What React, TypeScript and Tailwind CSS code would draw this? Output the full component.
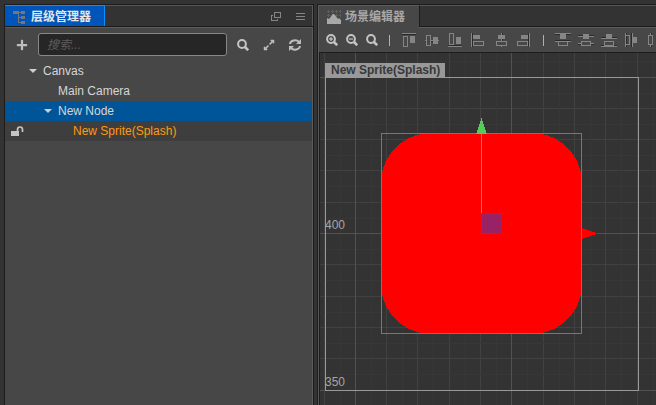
import { useState } from 'react';
import { FaExpandAlt, FaPlus } from 'react-icons/fa';

type AlignKind = 'top' | 'middle' | 'bottom' | 'left' | 'center' | 'right';
type DistributeKind = 'top' | 'middle' | 'bottom' | 'left' | 'center';

const tree = [
  { name: 'Canvas', pad: 'pl-0', open: true, unlocked: false },
  { name: 'Main Camera', pad: 'pl-[15px]', open: false, unlocked: false },
  { name: 'New Node', pad: 'pl-[15px]', open: true, unlocked: false },
  { name: 'New Sprite(Splash)', pad: 'pl-[30px]', open: false, unlocked: true },
];

const alignItems: AlignKind[] = ['top', 'middle', 'bottom', 'left', 'center', 'right'];
const distributeItems: DistributeKind[] = ['top', 'middle', 'bottom', 'left', 'center'];

function TreeIcon() {
  return (
    <svg width="13" height="14" viewBox="0 0 13 14" fill="none" shapeRendering="crispEdges" aria-hidden="true">
      <path d="M0 1h6v3H0zM8 1h4v3H8zM8 6h4v3H8zM8 11h4v3H8z" fill="#74767a" />
      <path d="M6 2.5h2M5.500 4v8.5H8M5.500 7.5H8" stroke="#74767a" />
    </svg>
  );
}

function SceneIcon() {
  return (
    <svg width="14" height="14" viewBox="0 0 14 14" aria-hidden="true">
      <path d="M0 1.5h14M0 5.5h14M1.5 0v8M5.5 0v8M9.5 0v8M13.5 0v8" stroke="#5e5e5e" strokeDasharray="3 1" shapeRendering="crispEdges" />
      <path d="M0 14V8l2 1 4-5h1l4 5 1-1 2 2v4z" fill="#a8a8a8" />
    </svg>
  );
}

function RefreshIcon() {
  return (
    <svg width="12" height="12" viewBox="0 0 12 12" fill="none" stroke="#bdbdbd" strokeWidth="2" aria-hidden="true">
      <path d="M1 5a5 4 0 0 1 9-2M11 7a5 4 0 0 1-9 2" />
      <path d="M12 0v5H7zM0 12V7h5z" fill="#bdbdbd" stroke="none" />
    </svg>
  );
}

function UnlockIcon() {
  return (
    <svg width="13" height="11" viewBox="0 0 13 11" fill="none" aria-hidden="true">
      <path d="M0 5h8v5H0z" fill="#c4c4c4" />
      <path d="M6.500 5V3.500a2.500 2.500 0 0 1 5 0V6" stroke="#c4c4c4" strokeWidth="1.7" />
    </svg>
  );
}

function ZoomIcon({ sign }: { sign?: 'plus' | 'minus' }) {
  return (
    <svg width="12" height="12" viewBox="0 0 12 12" fill="none" stroke="#c4c4c4" aria-hidden="true">
      <circle cx="5" cy="5" r="3.9" strokeWidth="2" />
      <path d="M8 8l3.200 3.200" strokeWidth="2.6" />
      {sign && <path d="M3 5h4" strokeWidth="1.2" />}
      {sign === 'plus' && <path d="M5 3v4" strokeWidth="1.2" />}
    </svg>
  );
}

const alignPaths = {
  top: { line: 'M0 .5h14', shade: 'M0 1.5h14', box: 'M1.5 3.5h4v10h-4z', solid: 'M8 3h5v7H8z' },
  middle: { line: 'M0 7.5h1M6 7.5h3M13 7.5h1', shade: 'M0 8.5h1M6 8.5h3', box: 'M1.5 2.5h4v10h-4z', solid: 'M8 4h5v7H8z' },
  bottom: { line: 'M0 13.5h14', shade: 'M0 12.5h14', box: 'M1.5 .5h4v11h-4z', solid: 'M8 4h5v7H8z' },
  left: { line: 'M.5 0v14', shade: 'M1.5 0v14', box: 'M2.5 8.5h10v4h-10z', solid: 'M2 2h7v4H2z' },
  center: { line: 'M7.5 0v2M7.5 6v2M7.5 13v1', shade: 'M8.5 0v2M8.5 6v2', box: 'M2.5 8.5h10v4h-10z', solid: 'M4 2h7v4H4z' },
  right: { line: 'M12.5 0v14', shade: 'M11.5 0v14', box: 'M.5 8.5h10v4H.5z', solid: 'M4 2h7v4H4z' },
};

function AlignIcon({ kind }: { kind: AlignKind }) {
  const { line, shade, box, solid } = alignPaths[kind];
  return (
    <svg width="14" height="14" viewBox="0 0 14 14" fill="none" stroke="#858585" shapeRendering="crispEdges" aria-hidden="true">
      <path d={shade} stroke="#2b2b2b" />
      <path d={line} />
      <path d={box} />
      <path d={solid} fill="#858585" stroke="none" />
    </svg>
  );
}

const distributePaths = {
  top: { line: 'M0 .5h16M0 8.5h16', shade: 'M0 1.5h16M0 7.5h16', box: 'M3.5 8.5h9v4h-9z', solid: 'M5 1h6v5H5z' },
  middle: { line: 'M0 3.5h16M0 10.5h3M13 10.5h3', shade: 'M0 2.5h16M0 11.5h3M13 11.5h3', box: 'M3.5 8.5h9v4h-9z', solid: 'M5 1h6v5H5z' },
  bottom: { line: 'M0 5.5h16M0 13.5h16', shade: 'M0 4.5h16M0 12.5h16', box: 'M3.5 8.5h9v4h-9z', solid: 'M5 1h6v4H5z' },
  left: { line: 'M1.5 0v14M8.5 0v14', shade: 'M2.5 0v14M7.500 0v14', box: 'M1.5 2.5h4v9h-4z', solid: 'M9 4h4v6h-4z' },
  center: { line: 'M3.5 0v2M3.5 12v2M11.5 0v14', shade: 'M4.5 0v2M4.5 12v2', box: 'M1.5 2.5h4v9h-4z', solid: 'M10 4h4v6h-4z' },
};

function DistributeIcon({ kind }: { kind: DistributeKind }) {
  const { line, shade, box, solid } = distributePaths[kind];
  return (
    <svg width="16" height="14" viewBox="0 0 16 14" fill="none" stroke="#858585" shapeRendering="crispEdges" aria-hidden="true">
      <path d={shade} stroke="#2b2b2b" />
      <path d={line} />
      <path d={box} />
      <path d={solid} fill="#858585" stroke="none" />
    </svg>
  );
}

function Divider() {
  return <span className="h-[11px] w-px shrink-0 bg-[#b0b0b0]" />;
}

function Hierarchy() {
  const [selected, setSelected] = useState('New Node');
  const iconButton = 'flex h-5 w-5 items-center justify-center text-[#bdbdbd]';

  return (
    <section className="flex w-[310px] shrink-0 flex-col border border-b-0 border-[#1c1c1c] bg-[#474747]">
      <header className="flex h-[22px] items-stretch border-b border-[#1c1c1c] bg-[#333]">
        <h2 className="flex w-[100px] items-center gap-[5px] border-t border-r border-[#0b8cff] bg-[#0055bb] pt-px pl-2 text-[12px] font-bold text-[#e6e6e6]">
          <TreeIcon />
          层级管理器
        </h2>
        <div className="flex flex-1 items-center justify-end gap-[15px] border-t border-r border-[#565656] pr-[7px]">
          <button type="button" aria-label="Pop out">
            <svg width="10" height="9" viewBox="0 0 10 9" fill="none" stroke="#858585" shapeRendering="crispEdges">
              <path d="M3.5 .5h6v5h-6zM2 3.5H.5v5h6V7" />
            </svg>
          </button>
          <button type="button" aria-label="Menu">
            <svg width="9" height="7" viewBox="0 0 9 7" stroke="#858585" shapeRendering="crispEdges">
              <path d="M0 .5h9M0 3.5h9M0 6.5h9" />
            </svg>
          </button>
        </div>
      </header>
      <div className="flex flex-1 flex-col border-t border-r border-[#5c5c5c]">
        <div className="flex h-[33px] items-center gap-[6px] px-[7px]">
          <button type="button" aria-label="Add" className={iconButton}><FaPlus size={12} /></button>
          <input
            aria-label="搜索"
            placeholder="搜索..."
            className="h-[23px] min-w-0 flex-1 rounded-[3px] border border-[#888] bg-[#262626] px-2 text-[12px] text-[#ccc] italic placeholder-[#5c5c5c]"
          />
          <button type="button" aria-label="Search" className={iconButton}><ZoomIcon /></button>
          <button type="button" aria-label="Expand" className={iconButton}><FaExpandAlt size={12} /></button>
          <button type="button" aria-label="Refresh" className={iconButton}><RefreshIcon /></button>
        </div>
        <ul>
          {tree.map((node) => (
            <li
              key={node.name}
              className={`flex h-5 items-center text-[12px] ${
                node.name === selected ? 'bg-[#005599]' : node.unlocked ? 'bg-[#3e3e3e]' : ''
              } ${node.unlocked ? 'text-[#fd9a10]' : 'text-[#d6d6d6]'}`}
            >
              <span className="flex w-6 shrink-0 justify-center">
                {node.unlocked && <UnlockIcon />}
              </span>
              <button
                type="button"
                onClick={() => setSelected(node.name)}
                className={`flex flex-1 items-center ${node.pad}`}
              >
                <span className="w-[14px] shrink-0">
                  {node.open && (
                    <svg width="8" height="4" viewBox="0 0 8 4" fill="#cfcfcf">
                      <path d="M0 0h8L4 4z" />
                    </svg>
                  )}
                </span>
                {node.name}
              </button>
            </li>
          ))}
        </ul>
      </div>
    </section>
  );
}

// grid cells are 10 world units wide, every fifth line is a major one
const CELL = 31.3;

function SceneView() {
  const lines = Array.from({ length: 64 }, (_, i) => i - 1);
  return (
    <svg className="min-h-0 w-full flex-1 bg-[#333]" fill="none" shapeRendering="crispEdges" role="img" aria-label="Scene">
      {lines.map((i) => {
        const x = Math.floor(4 + i * CELL) + 0.5;
        const y = Math.floor(24 + i * CELL) + 0.5;
        return (
          <g key={i} stroke="#414141">
            <line x1={x + 16} x2={x + 16} y1="0" y2="100%" stroke="#373737" />
            <line x1="0" x2="100%" y1={y + 16} y2={y + 16} stroke="#373737" />
            <line x1={x} x2={x} y1="0" y2="100%" />
            <line x1="0" x2="100%" y1={y} y2={y} />
          </g>
        );
      })}
      {lines.filter((i) => i % 5 === 0).map((i) => {
        const x = Math.floor(4 + (i + 1) * CELL) + 0.5;
        const y = Math.floor(24 + i * CELL) + 0.5;
        return (
          <g key={i} stroke="#525252">
            <line x1={x} x2={x} y1="0" y2="100%" />
            <line x1="0" x2="100%" y1={y} y2={y} />
          </g>
        );
      })}
      <rect x="5.5" y="24.5" width="313" height="313" stroke="#999" />
      <g className="text-[12px]" fill="#a5a5a5">
        <text x="5" y="176">400</text>
        <text x="5" y="333">350</text>
      </g>
      <rect x="5" y="10" width="120" height="15" fill="#999" />
      <text x="11" y="21" className="text-[12px] font-bold" fill="#383838">New Sprite(Splash)</text>

      <rect x="61" y="80" width="201" height="201" rx="50" fill="#f00" />
      <rect x="61.5" y="80.5" width="200" height="200" stroke="#1d8fe8" />
      <path d="M161.5 81v79" stroke="#9b9b35" />
      <path d="M161.5 65l5.5 16h-11z" fill="#55cc55" />
      <path d="M262 175l16 5.5-16 5.5z" fill="#f00" />
      <rect x="161.5" y="160.5" width="20" height="20" fill="#992266" stroke="#4a3fc4" />
    </svg>
  );
}

function SceneEditor() {
  const tool = 'flex shrink-0 items-center justify-center';
  return (
    <section className="flex min-w-0 flex-1 flex-col border-t border-l border-[#1c1c1c] bg-[#474747]">
      <header className="flex h-[23px] shrink-0 border-l border-[#5c5c5c]">
        <h2 className="flex w-[100px] items-center gap-1 border-t border-[#5c5c5c] pl-2 text-[12px] font-bold text-[#a8a8a8]">
          <SceneIcon />
          场景编辑器
        </h2>
        <div className="flex flex-1 flex-col border-b border-[#5c5c5c]">
          <div className="flex-1 border-t border-b border-l border-t-[#565656] border-b-[#1c1c1c] border-l-[#1c1c1c] bg-[#333]" />
        </div>
      </header>
      <div className="flex h-6 shrink-0 items-center overflow-hidden border-l border-[#5c5c5c] pl-[7px]">
        <div className="flex items-center gap-2 pr-[11px]">
          <button type="button" aria-label="Zoom in" className={tool}><ZoomIcon sign="plus" /></button>
          <button type="button" aria-label="Zoom out" className={tool}><ZoomIcon sign="minus" /></button>
          <button type="button" aria-label="Reset zoom" className={tool}><ZoomIcon /></button>
        </div>
        <Divider />
        <div className="flex items-center gap-[9px] px-3">
          {alignItems.map((kind) => (
            <button key={kind} type="button" aria-label={`Align ${kind}`} className={tool}>
              <AlignIcon kind={kind} />
            </button>
          ))}
        </div>
        <Divider />
        <div className="flex items-center gap-[7px] pl-[11px]">
          {distributeItems.map((kind) => (
            <button key={kind} type="button" aria-label={`Distribute ${kind}`} className={tool}>
              <DistributeIcon kind={kind} />
            </button>
          ))}
        </div>
      </div>
      <div className="flex flex-1 flex-col border-l border-[#5c5c5c]">
        <div className="flex flex-1 flex-col border-t border-l border-[#1c1c1c]">
          <SceneView />
        </div>
      </div>
    </section>
  );
}

export default function App() {
  return (
    <div className="flex min-h-screen gap-[3px] bg-[#333] pt-1 pl-1 font-['Liberation_Sans','Noto_Sans_CJK_SC',sans-serif]">
      <Hierarchy />
      <SceneEditor />
    </div>
  );
}
